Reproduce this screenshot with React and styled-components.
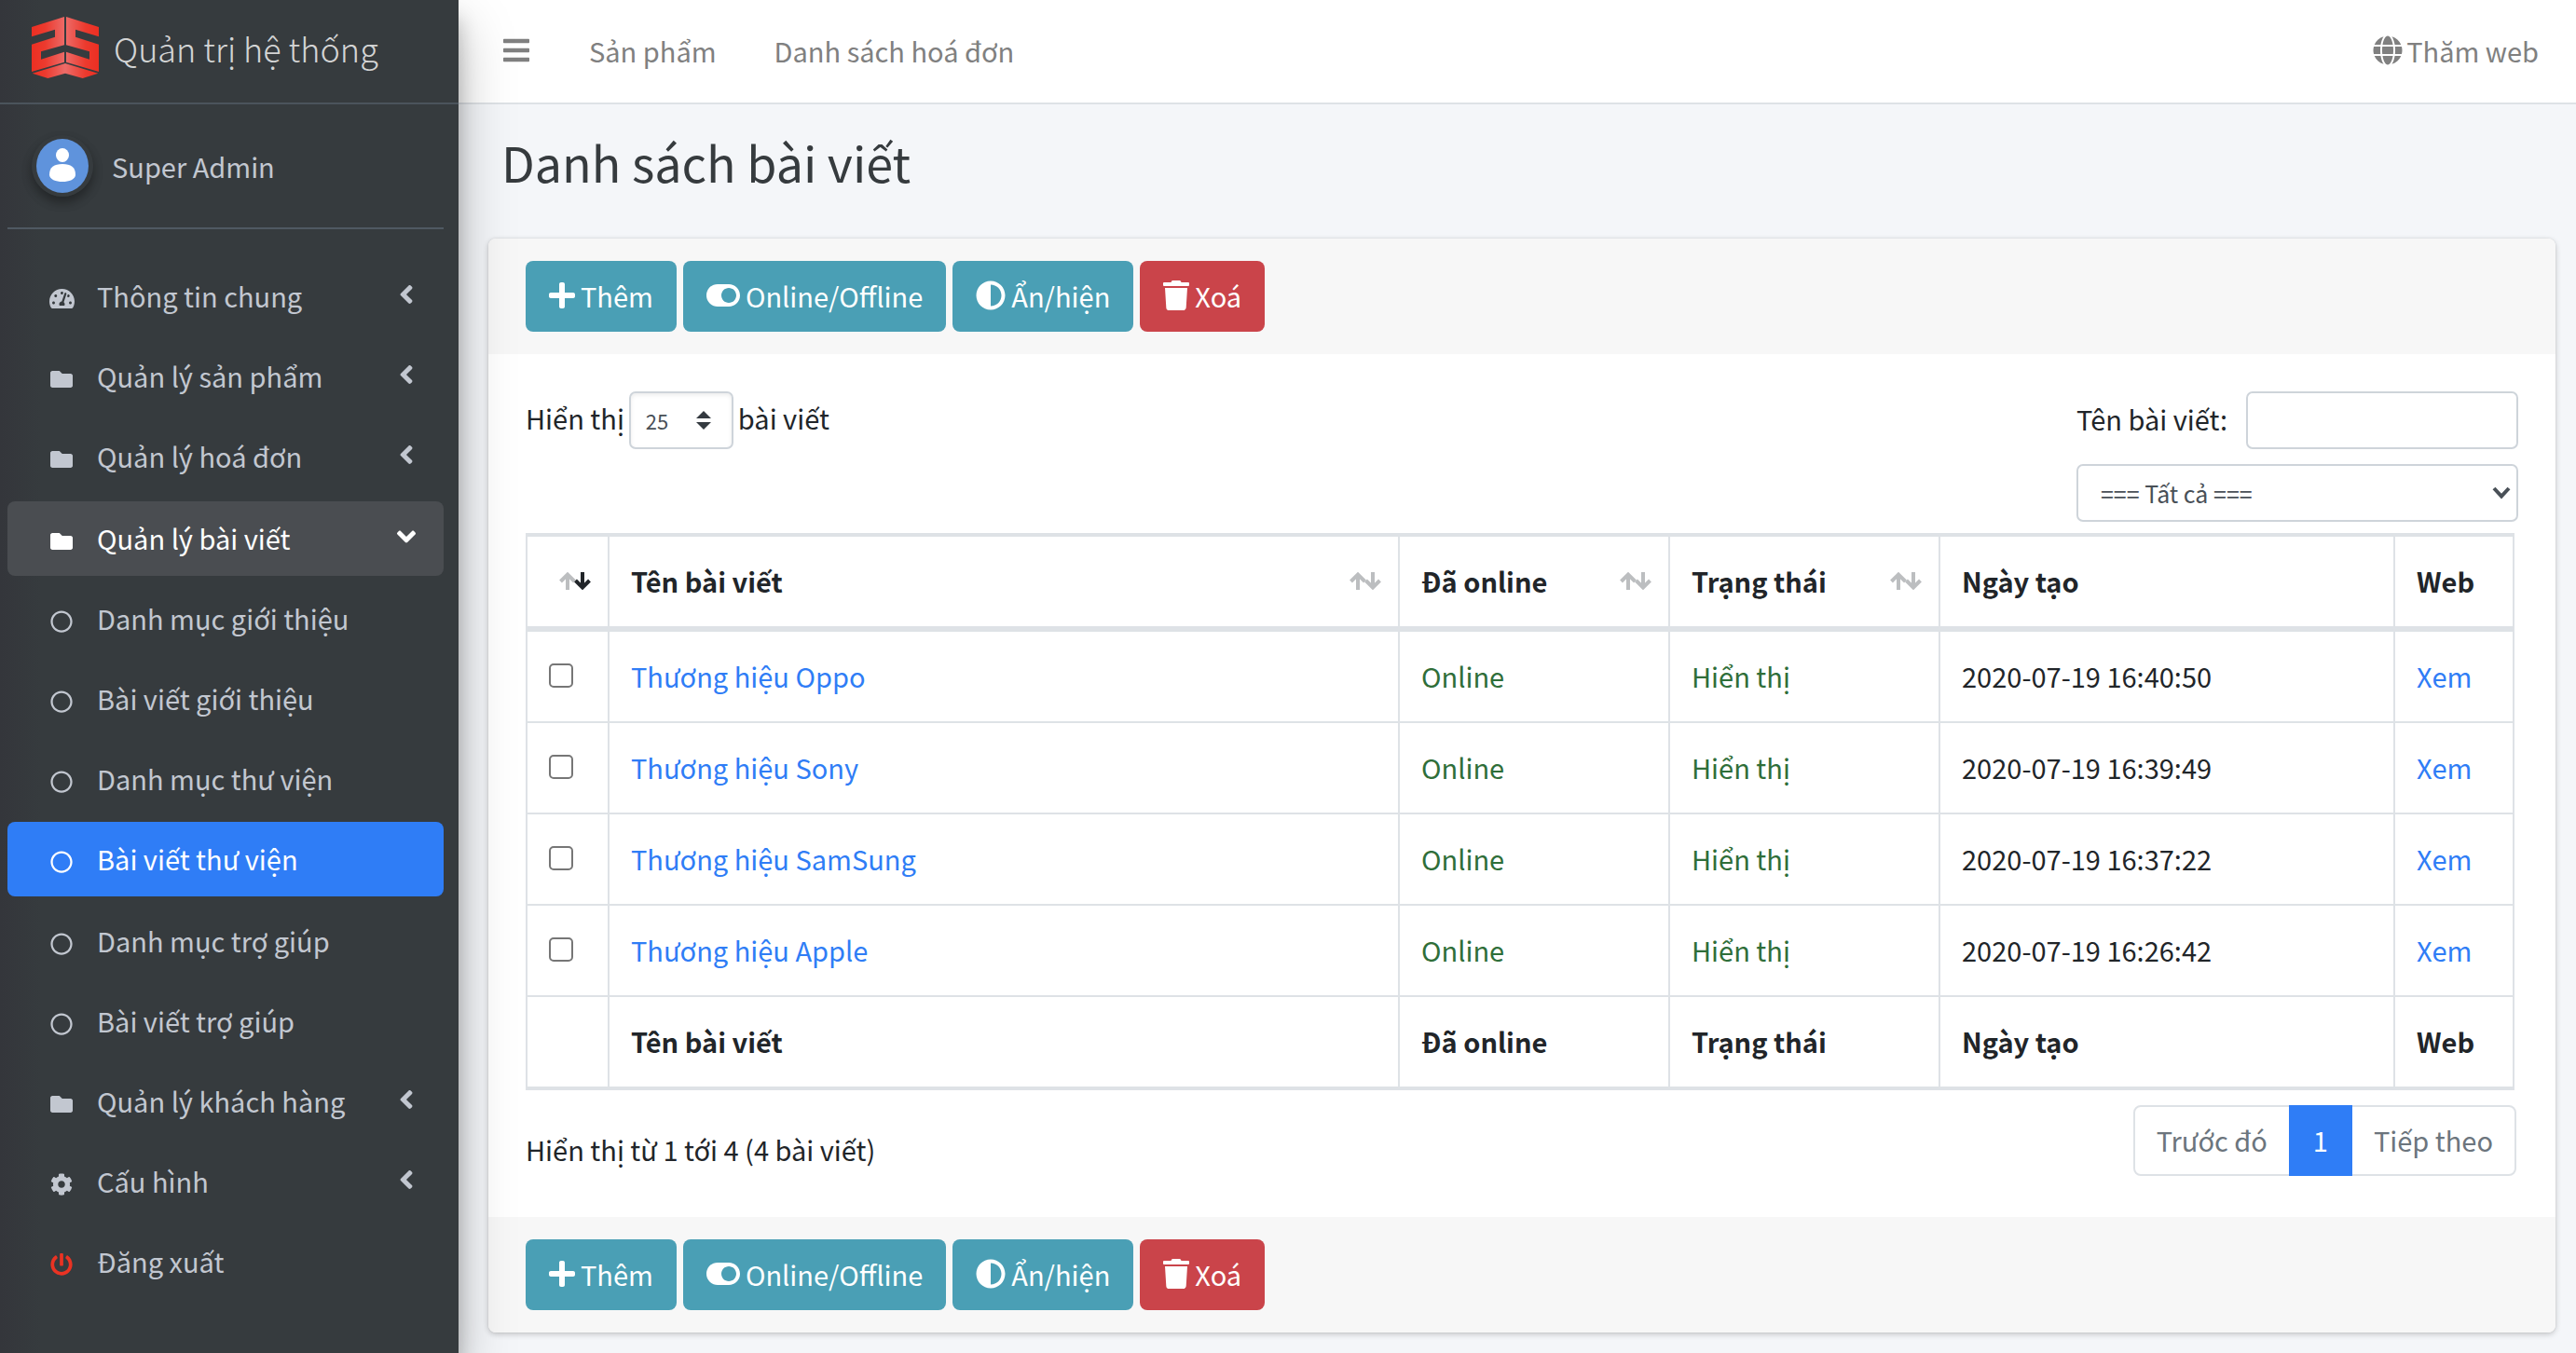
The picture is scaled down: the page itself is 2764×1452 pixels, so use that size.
import React from "react";
import styled, { createGlobalStyle, css } from "styled-components";
import {
  FaAdjust,
  FaAngleLeft,
  FaBars,
  FaCog,
  FaFolder,
  FaGlobe,
  FaPlus,
  FaPowerOff,
  FaRegCircle,
  FaTachometerAlt,
  FaToggleOn,
  FaTrash,
} from "react-icons/fa";

const color = {
  dark: "#363b3e",
  ink: "#212529",
  line: "#dee2e6",
  field: "#ced4da",
  muted: "#6c757d",
  nav: "#c2c7d0",
  blue: "#2f7df6",
  teal: "#4a9fb5",
  red: "#ca444a",
  green: "#2f6e39",
};

const GlobalStyle = createGlobalStyle`
  *, *::before, *::after { box-sizing: border-box; }
  body {
    margin: 0;
    background: #f4f6f9;
    color: ${color.ink};
    font: 400 29px/48px "Noto Sans CJK SC", "Noto Sans", sans-serif;
  }
  button, input, select { font: inherit; color: inherit; margin: 0; }
  a { color: ${color.blue}; text-decoration: none; }
`;

const Layout = styled.div`
  display: flex;
  min-height: 100vh;
`;

/* ---------- Sidebar ---------- */

const Sidebar = styled.aside`
  position: relative;
  z-index: 2;
  flex: 0 0 492px;
  background: linear-gradient(90deg, #34363b 0, ${color.dark} 44px);
  box-shadow: 0 28px 56px rgba(0, 0, 0, 0.25), 0 20px 20px rgba(0, 0, 0, 0.22);
`;

const Brand = styled.a`
  display: flex;
  align-items: center;
  gap: 16px;
  height: 112px;
  padding: 0 34px 8px;
  border-bottom: 2px solid #4b545c;
  color: rgba(255, 255, 255, 0.8);
  font-size: 36px;
  font-weight: 300;
  white-space: nowrap;
`;

const SidebarBody = styled.div`
  padding: 0 16px 0 8px;
`;

const UserPanel = styled.div`
  display: flex;
  align-items: center;
  gap: 20px;
  height: 134px;
  padding: 0 26px;
  border-bottom: 2px solid #4f5962;

  a { color: ${color.nav}; }
`;

const Avatar = styled.svg`
  width: 66px;
  height: 66px;
  border-radius: 50%;
  box-shadow: 0 6px 12px rgba(0, 0, 0, 0.16), 0 6px 12px rgba(0, 0, 0, 0.23);
`;

const NavList = styled.ul`
  list-style: none;
  margin: 0;
  padding: ${(p) => (p.$nested ? 0 : "32px 0")};
`;

const NavItem = styled.li`
  padding-top: ${(p) => (p.$open ? "2px" : 0)};
`;

const NavLink = styled.a`
  display: flex;
  align-items: center;
  height: 80px;
  margin-bottom: 6px;
  padding: 0 24px 2px 32px;
  border-radius: 8px;
  color: ${color.nav};

  ${(p) =>
    p.$state === "open" &&
    css`
      background: #4a4d51;
      color: #fff;
    `}
  ${(p) =>
    p.$state === "active" &&
    css`
      margin-bottom: 8px;
      background: ${color.blue};
      color: #fff;
    `}
`;

const NavIcon = styled.span`
  display: flex;
  justify-content: center;
  width: 52px;
  margin-right: 12px;
  padding-top: 7px;
  font-size: ${(p) => p.$size || 24}px;
  color: ${(p) => p.$tint || "inherit"};
`;

const NavLabel = styled.span`
  flex: 1;
  white-space: nowrap;
`;

const Chevron = styled.span`
  display: flex;
  padding-bottom: 2px;
  font-size: 32px;

  svg { transform: ${(p) => (p.$down ? "rotate(-90deg)" : "none")}; }
`;

/* ---------- Main column ---------- */

const Main = styled.div`
  flex: 1;
  min-width: 0;
`;

const TopBar = styled.header`
  display: flex;
  align-items: center;
  justify-content: space-between;
  height: 112px;
  padding: 0 40px 2px 46px;
  background: #fff;
  border-bottom: 2px solid ${color.line};
`;

const TopLinks = styled.nav`
  display: flex;
  align-items: center;
  gap: 62px;
`;

const TopLink = styled.a`
  display: flex;
  align-items: center;
  gap: 4px;
  color: #808080;

  svg { font-size: 32px; }
`;

const MenuButton = styled.button`
  display: flex;
  padding: 0;
  border: 0;
  background: none;
  color: #808080;
  font-size: 32px;
`;

const PageTitle = styled.h1`
  margin: 0;
  padding: 28px 46px 48px;
  color: ${color.dark};
  font-size: 52px;
  font-weight: 400;
  line-height: 68px;
`;

const Card = styled.section`
  margin: 0 22px 22px 32px;
  border-radius: 8px;
  background: #fff;
  box-shadow: 0 0 2px rgba(0, 0, 0, 0.125), 0 2px 6px rgba(0, 0, 0, 0.2);
  overflow: hidden;
`;

const ActionBar = styled.div`
  display: flex;
  gap: 7px;
  padding: 24px 40px;
  background: #f7f7f7;
`;

const ActionButton = styled.button`
  display: flex;
  align-items: center;
  gap: 6px;
  height: 76px;
  padding: 0 25px 2px;
  border: 0;
  border-radius: 8px;
  background: ${(p) => (p.$danger ? color.red : color.teal)};
  color: #fff;
`;

const ButtonIcon = styled.span`
  display: flex;
  justify-content: center;
  width: ${(p) => p.$width}px;
  font-size: ${(p) => Math.max(p.$width, 32)}px;

  svg { flex: none; }
`;

const CardBody = styled.div`
  padding: 40px 40px 44px;
`;

const Filters = styled.div`
  display: flex;
  align-items: flex-start;
  justify-content: space-between;
  margin-bottom: 12px;
`;

const LengthLabel = styled.label`
  display: flex;
  align-items: baseline;
  gap: 5px;
`;

const SelectBox = styled.span`
  position: relative;
  display: block;

  svg {
    position: absolute;
    top: 50%;
    right: ${(p) => p.$inset}px;
    transform: translateY(-50%);
    pointer-events: none;
  }
`;

const field = css`
  display: block;
  height: 62px;
  border: 2px solid ${color.field};
  border-radius: 7px;
  background: #fff;
  color: #495057;
  appearance: none;
  outline: none;
`;

const LengthSelect = styled.select`
  ${field}
  width: 112px;
  padding: 0 16px;
  font-size: 22px;
  box-shadow: inset 0 2px 4px rgba(0, 0, 0, 0.08);
`;

const SearchGroup = styled.div`
  display: grid;
  grid-template-columns: auto 292px;
  align-items: baseline;
  gap: 16px 20px;

  > :last-child { grid-column: 1 / -1; }
`;

const SearchInput = styled.input`
  ${field}
  width: 100%;
  padding: 0 16px;
  font-size: 25px;
`;

const CategorySelect = styled.select`
  ${field}
  width: 100%;
  padding: 0 24px;
  font-size: 25px;
`;

const Table = styled.table`
  width: calc(100% - 4px);
  table-layout: fixed;
  border-collapse: separate;
  border-spacing: 0;
  border-bottom: 2px solid ${color.line};

  th, td {
    height: 98px;
    padding: 0 17px 2px 23px;
    border-left: 2px solid ${color.line};
    border-bottom: 2px solid ${color.line};
    text-align: left;
    vertical-align: middle;
    white-space: nowrap;
  }
  th { font-weight: 700; }
  th:last-child, td:last-child { border-right: 2px solid ${color.line}; }
  thead th {
    height: 106px;
    border-top: 4px solid ${color.line};
    border-bottom-width: 6px;
  }
`;

const Col = styled.col`
  width: ${(p) => p.$width || "auto"};
`;

const HeadCell = styled.div`
  display: flex;
  align-items: center;
  justify-content: space-between;
`;

const SortIcon = styled.svg`
  flex: none;
  width: 36px;
  height: 20px;
  margin-left: auto;
  fill: none;
  stroke-width: 4;
`;

const Status = styled.span`
  color: ${color.green};
`;

const Checkbox = styled.input`
  display: block;
  width: 26px;
  height: 26px;
  border: 2px solid #767676;
  border-radius: 5px;
  background: #fff;
  appearance: none;

  &:checked { background: ${color.blue}; }
`;

const TableFooter = styled.div`
  display: flex;
  align-items: flex-start;
  justify-content: space-between;
  padding: 16px 2px 0 0;
`;

const Info = styled.div`
  padding-top: 23px;
`;

const Pagination = styled.nav`
  display: flex;
  height: 76px;
  border: 2px solid ${color.line};
  border-radius: 8px;
`;

const PageLink = styled.a`
  display: flex;
  align-items: center;
  margin: ${(p) => (p.$active ? "-2px 0" : 0)};
  padding: 0 ${(p) => (p.$active ? 26 : 23)}px 2px;
  background: ${(p) => (p.$active ? color.blue : "transparent")};
  color: ${(p) => (p.$active ? "#fff" : color.muted)};
`;

/* ---------- Drawings ---------- */

function Logo() {
  const half =
    "102,87 207,54 207,145 132,166 132,191 207,167 207,200 102,231 102,143 177,119 177,95 102,118";
  return (
    <svg width="72" height="66" viewBox="102 54 216 198" aria-hidden="true">
      <defs>
        <linearGradient id="logo-red" gradientUnits="userSpaceOnUse" x1="102" y1="0" x2="318" y2="0">
          <stop offset="0" stopColor="#ec2f22" />
          <stop offset="0.2" stopColor="#ec3a2e" />
          <stop offset="0.5" stopColor="#ec6c69" />
          <stop offset="0.8" stopColor="#ec3a2e" />
          <stop offset="1" stopColor="#ec2f22" />
        </linearGradient>
        <linearGradient id="logo-half" gradientUnits="userSpaceOnUse" x1="102" y1="0" x2="210" y2="0">
          <stop offset="0" stopColor="#ec2f22" />
          <stop offset="0.4" stopColor="#ec3a2e" />
          <stop offset="1" stopColor="#ec6c69" />
        </linearGradient>
      </defs>
      <polygon points={half} fill="url(#logo-half)" />
      <g transform="translate(420 0) scale(-1 1)">
        <polygon points={half} fill="url(#logo-half)" />
      </g>
      <polygon points="104,236 210,204 316,236 266,252 210,236 154,252" fill="url(#logo-red)" />
    </svg>
  );
}

function UserAvatar() {
  return (
    <Avatar viewBox="0 0 66 66" aria-hidden="true">
      <circle cx="33" cy="33" r="33" fill="#363b3e" />
      <ellipse cx="33" cy="33" rx="28" ry="29" fill="#5f93dc" />
      <ellipse cx="33" cy="21.5" rx="7" ry="7.5" fill="#fff" />
      <path
        d="M19 42.500c0-8 5-11.500 14-11.500S47 34.500 47 42.500c0 5-7 7.500-14 7.500S19 47.500 19 42.500z"
        fill="#fff"
      />
    </Avatar>
  );
}

function Sort({ descending }) {
  return (
    <SortIcon viewBox="0 0 36 20" aria-hidden="true">
      <path d="M10 20V4M2.500 11L10 3.500L17.500 11" stroke="#bcbec0" />
      <path d="M26 1V17M18.500 10L26 17.500L33.500 10" stroke={descending ? color.ink : "#bcbec0"} />
    </SortIcon>
  );
}

/* ---------- Data ---------- */

const menu = [
  { label: "Thông tin chung", icon: FaTachometerAlt, iconSize: 27, group: true },
  { label: "Quản lý sản phẩm", icon: FaFolder, group: true },
  { label: "Quản lý hoá đơn", icon: FaFolder, group: true },
  {
    label: "Quản lý bài viết",
    icon: FaFolder,
    group: true,
    children: [
      { label: "Danh mục giới thiệu" },
      { label: "Bài viết giới thiệu" },
      { label: "Danh mục thư viện" },
      { label: "Bài viết thư viện", active: true },
      { label: "Danh mục trợ giúp" },
      { label: "Bài viết trợ giúp" },
    ],
  },
  { label: "Quản lý khách hàng", icon: FaFolder, group: true },
  { label: "Cấu hình", icon: FaCog, group: true },
  { label: "Đăng xuất", icon: FaPowerOff, tint: "#ea3323" },
];

const actions = [
  { label: "Thêm", icon: FaPlus, width: 28 },
  { label: "Online/Offline", icon: FaToggleOn, width: 36 },
  { label: "Ẩn/hiện", icon: FaAdjust, width: 32 },
  { label: "Xoá", icon: FaTrash, width: 28, danger: true },
];

const columns = [
  { label: "", width: "88px", sortable: true, descending: true },
  { label: "Tên bài viết", sortable: true },
  { label: "Đã online", width: "290px", sortable: true },
  { label: "Trạng thái", width: "290px", sortable: true },
  { label: "Ngày tạo", width: "488px" },
  { label: "Web", width: "130px" },
];

const posts = [
  { title: "Thương hiệu Oppo", created: "2020-07-19 16:40:50" },
  { title: "Thương hiệu Sony", created: "2020-07-19 16:39:49" },
  { title: "Thương hiệu SamSung", created: "2020-07-19 16:37:22" },
  { title: "Thương hiệu Apple", created: "2020-07-19 16:26:42" },
];

/* ---------- Parts ---------- */

function MenuEntry({ item }) {
  const Icon = item.icon || FaRegCircle;
  const open = Boolean(item.children);
  return (
    <NavItem $open={open}>
      <NavLink href="#" $state={open ? "open" : item.active ? "active" : undefined}>
        <NavIcon $tint={item.tint} $size={item.iconSize}>
          <Icon />
        </NavIcon>
        <NavLabel>{item.label}</NavLabel>
        {item.group && (
          <Chevron $down={open}>
            <FaAngleLeft />
          </Chevron>
        )}
      </NavLink>
      {open && (
        <NavList $nested>
          {item.children.map((child) => (
            <MenuEntry key={child.label} item={child} />
          ))}
        </NavList>
      )}
    </NavItem>
  );
}

function Actions() {
  return (
    <ActionBar>
      {actions.map(({ label, icon: Icon, width, danger }) => (
        <ActionButton key={label} type="button" $danger={danger}>
          <ButtonIcon $width={width}>
            <Icon />
          </ButtonIcon>
          {label}
        </ActionButton>
      ))}
    </ActionBar>
  );
}

export default function App() {
  return (
    <Layout>
      <GlobalStyle />
      <Sidebar>
        <Brand href="#">
          <Logo />
          Quản trị hệ thống
        </Brand>
        <SidebarBody>
          <UserPanel>
            <UserAvatar />
            <a href="#">Super Admin</a>
          </UserPanel>
          <nav>
            <NavList>
              {menu.map((item) => (
                <MenuEntry key={item.label} item={item} />
              ))}
            </NavList>
          </nav>
        </SidebarBody>
      </Sidebar>

      <Main>
        <TopBar>
          <TopLinks>
            <MenuButton type="button" aria-label="Menu">
              <FaBars />
            </MenuButton>
            <TopLink href="#">Sản phẩm</TopLink>
            <TopLink href="#">Danh sách hoá đơn</TopLink>
          </TopLinks>
          <TopLink href="#">
            <FaGlobe />
            Thăm web
          </TopLink>
        </TopBar>

        <PageTitle>Danh sách bài viết</PageTitle>

        <Card>
          <Actions />
          <CardBody>
            <Filters>
              <LengthLabel>
                Hiển thị
                <SelectBox $inset={24}>
                  <LengthSelect defaultValue="25">
                    <option>25</option>
                  </LengthSelect>
                  <svg width="16" height="20" viewBox="0 0 16 20" fill="#343a40" aria-hidden="true">
                    <path d="M0 8L8 0L16 8zM0 12L8 20L16 12z" />
                  </svg>
                </SelectBox>
                bài viết
              </LengthLabel>
              <SearchGroup>
                <label htmlFor="post-name">Tên bài viết:</label>
                <SearchInput id="post-name" type="text" />
                <SelectBox $inset={8}>
                  <CategorySelect aria-label="Danh mục" defaultValue="all">
                    <option value="all">=== Tất cả ===</option>
                  </CategorySelect>
                  <svg width="20" height="14" viewBox="0 0 20 14" fill="none" aria-hidden="true">
                    <path d="M2 2L10 10.500L18 2" stroke="#495057" strokeWidth="4" />
                  </svg>
                </SelectBox>
              </SearchGroup>
            </Filters>

            <Table>
              <colgroup>
                {columns.map((c) => (
                  <Col key={c.label} $width={c.width} />
                ))}
              </colgroup>
              <thead>
                <tr>
                  {columns.map((c) => (
                    <th key={c.label} scope="col">
                      <HeadCell>
                        {c.label}
                        {c.sortable && <Sort descending={c.descending} />}
                      </HeadCell>
                    </th>
                  ))}
                </tr>
              </thead>
              <tbody>
                {posts.map((post) => (
                  <tr key={post.title}>
                    <td>
                      <Checkbox type="checkbox" aria-label={post.title} />
                    </td>
                    <td>
                      <a href="#">{post.title}</a>
                    </td>
                    <td>
                      <Status>Online</Status>
                    </td>
                    <td>
                      <Status>Hiển thị</Status>
                    </td>
                    <td>{post.created}</td>
                    <td>
                      <a href="#">Xem</a>
                    </td>
                  </tr>
                ))}
              </tbody>
              <tfoot>
                <tr>
                  {columns.map((c) => (
                    <th key={c.label}>{c.label}</th>
                  ))}
                </tr>
              </tfoot>
            </Table>

            <TableFooter>
              <Info>Hiển thị từ 1 tới 4 (4 bài viết)</Info>
              <Pagination>
                <PageLink href="#">Trước đó</PageLink>
                <PageLink href="#" $active>
                  1
                </PageLink>
                <PageLink href="#">Tiếp theo</PageLink>
              </Pagination>
            </TableFooter>
          </CardBody>
          <Actions />
        </Card>
      </Main>
    </Layout>
  );
}
